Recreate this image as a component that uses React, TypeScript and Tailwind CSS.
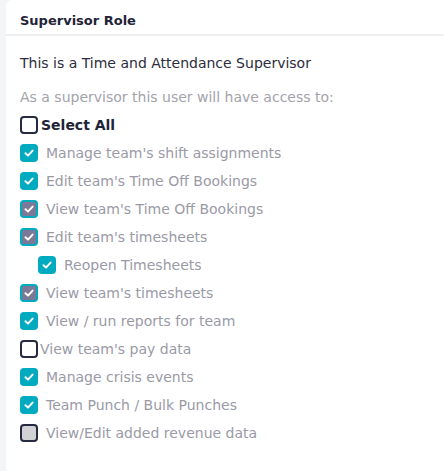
import React from "react";

type State = "checked" | "indeterminate" | "empty" | "disabled";

const Check = () => (
  <svg width="12" height="12" viewBox="0 0 12 12" fill="none">
    <path d="M2.5 6.2 L5 8.6 L9.6 3.6" stroke="white" strokeWidth="2" strokeLinecap="round" strokeLinejoin="round" />
  </svg>
);

function Box({ state }: { state: State }) {
  if (state === "checked")
    return (
      <span className="flex h-[18px] w-[18px] shrink-0 items-center justify-center rounded-[4px] bg-[#00abc0]">
        <Check />
      </span>
    );
  if (state === "indeterminate")
    return (
      <span className="flex h-[18px] w-[18px] shrink-0 items-center justify-center rounded-[4px] border-2 border-[#00abc0] bg-[#7a7997]">
        <Check />
      </span>
    );
  if (state === "disabled")
    return <span className="h-[18px] w-[18px] shrink-0 rounded-[4px] border-2 border-[#262a40] bg-[#d2d2d4]" />;
  return <span className="h-[18px] w-[18px] shrink-0 rounded-[4px] border-2 border-[#262a40] bg-white" />;
}

function Row({ label, state, indent, tight }: { label: string; state: State; indent?: boolean; tight?: boolean }) {
  return (
    <div className={`flex h-[28px] items-center ${indent ? "pl-[18px]" : ""} ${tight ? "gap-[2px]" : "gap-[8px]"}`}>
      <Box state={state} />
      <span className="text-[14px] text-[#9a9aa6]">{label}</span>
    </div>
  );
}

export default function App() {
  const items: { label: string; state: State; indent?: boolean; tight?: boolean }[] = [
    { label: "Manage team's shift assignments", state: "checked" },
    { label: "Edit team's Time Off Bookings", state: "checked" },
    { label: "View team's Time Off Bookings", state: "indeterminate" },
    { label: "Edit team's timesheets", state: "indeterminate" },
    { label: "Reopen Timesheets", state: "checked", indent: true },
    { label: "View team's timesheets", state: "indeterminate" },
    { label: "View / run reports for team", state: "checked" },
    { label: "View team's pay data", state: "empty", tight: true },
    { label: "Manage crisis events", state: "checked" },
    { label: "Team Punch / Bulk Punches", state: "checked" },
    { label: "View/Edit added revenue data", state: "disabled" },
  ];
  return (
    <div className="flex h-[471px] w-[444px] bg-[#f4f5f7]" style={{ fontFamily: '"DejaVu Sans", sans-serif' }}>
      <div className="ml-[6px] flex-1 rounded-tl-[6px] bg-white">
        <div className="flex h-[36px] items-center border-b-2 border-[#f0f0f2] px-[14px] pt-[8px]">
          <span className="text-[13px] font-bold text-[#1f2437]">Supervisor Role</span>
        </div>
        <div className="px-[14px]">
          <div className="pt-[17px] text-[14px] text-[#2b2d3c]">This is a Time and Attendance Supervisor</div>
          <div className="pt-[13px] text-[14px] text-[#a3a3ab]">As a supervisor this user will have access to:</div>
          <div className="mt-[3px] flex h-[28px] items-center gap-[3px]">
            <Box state="empty" />
            <span className="text-[14px] font-bold text-[#1f2437]">Select All</span>
          </div>
          <div>
            {items.map((it) => (
              <Row key={it.label} {...it} />
            ))}
          </div>
        </div>
      </div>
    </div>
  );
}
